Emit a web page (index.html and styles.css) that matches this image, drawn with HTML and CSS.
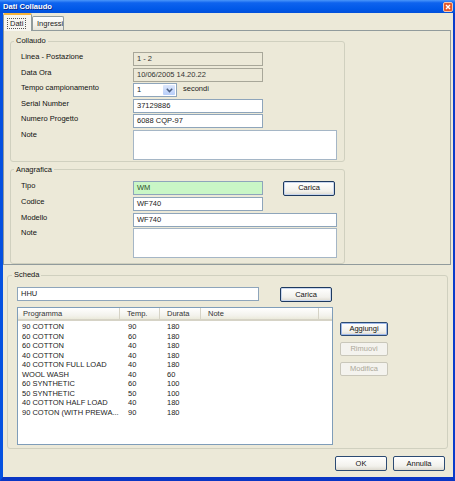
FILE: index.html
```html
<!DOCTYPE html>
<html>
<head>
<meta charset="utf-8">
<link rel="stylesheet" href="styles.css">
</head>
<body>
<div class="window">
  <div class="titlebar">
    <span class="title">Dati Collaudo</span>
    <span class="close"><svg width="10" height="10" viewBox="0 0 10 10"><rect x="0.5" y="0.5" width="9" height="9" rx="1.5" fill="#E2582C" stroke="#F4C8B0"/><path d="M3 3 L7 7 M7 3 L3 7" stroke="#fff" stroke-width="1.4"/></svg></span>
  </div>
  <div class="client">
    <div class="tabs">
      <div class="tab active"><span class="focus">Dati</span></div>
      <div class="tab">Ingressi</div>
    </div>
    <div class="tabpanel">
      <fieldset class="group g-collaudo">
        <legend>Collaudo</legend>
        <div class="form">
          <span class="lbl">Linea - Postazione</span><div class="field disabled">1 - 2</div>
          <span class="lbl">Data Ora</span><div class="field disabled">10/06/2005 14.20.22</div>
          <span class="lbl">Tempo campionamento</span>
          <div class="combo-row">
            <div class="combo"><span class="combo-val">1</span><span class="combo-btn"><svg width="7" height="5" viewBox="0 0 7 5"><path d="M0.8 0.8 L3.5 3.6 L6.2 0.8" fill="none" stroke="#4D6185" stroke-width="1.5"/></svg></span></div>
            <span class="unit">secondi</span>
          </div>
          <span class="lbl">Serial Number</span><div class="field">37129886</div>
          <span class="lbl">Numero Progetto</span><div class="field">6088 CQP-97</div>
          <span class="lbl">Note</span><div class="field area"></div>
        </div>
      </fieldset>
      <fieldset class="group g-anagrafica">
        <legend>Anagrafica</legend>
        <div class="form">
          <span class="lbl">Tipo</span>
          <div class="tipo-row"><div class="field green">WM</div><button class="btn strong">Carica</button></div>
          <span class="lbl">Codice</span><div class="field">WF740</div>
          <span class="lbl">Modello</span><div class="field wide">WF740</div>
          <span class="lbl">Note</span><div class="field area"></div>
        </div>
      </fieldset>
    </div>
    <fieldset class="group g-scheda">
      <legend>Scheda</legend>
      <div class="scheda-top">
        <div class="field hhu">HHU</div>
        <button class="btn strong">Carica</button>
      </div>
      <div class="scheda-main">
        <div class="list">
          <div class="list-head">
            <span class="hc c1">Programma</span><span class="hc c2">Temp.</span><span class="hc c3">Durata</span><span class="hc c4">Note</span><span class="hc c5"></span>
          </div>
          <div class="list-body">
            <div class="row"><span class="c1">90 COTTON</span><span class="c2">90</span><span class="c3">180</span></div>
            <div class="row"><span class="c1">60 COTTON</span><span class="c2">60</span><span class="c3">180</span></div>
            <div class="row"><span class="c1">60 COTTON</span><span class="c2">40</span><span class="c3">180</span></div>
            <div class="row"><span class="c1">40 COTTON</span><span class="c2">40</span><span class="c3">180</span></div>
            <div class="row"><span class="c1">40 COTTON FULL LOAD</span><span class="c2">40</span><span class="c3">180</span></div>
            <div class="row"><span class="c1">WOOL WASH</span><span class="c2">40</span><span class="c3">60</span></div>
            <div class="row"><span class="c1">60 SYNTHETIC</span><span class="c2">60</span><span class="c3">100</span></div>
            <div class="row"><span class="c1">50 SYNTHETIC</span><span class="c2">50</span><span class="c3">100</span></div>
            <div class="row"><span class="c1">40 COTTON HALF LOAD</span><span class="c2">40</span><span class="c3">180</span></div>
            <div class="row"><span class="c1">90 COTON (WITH PREWA...</span><span class="c2">90</span><span class="c3">180</span></div>
          </div>
        </div>
        <div class="side-btns">
          <button class="btn default">Aggiungi</button>
          <button class="btn disabled">Rimuovi</button>
          <button class="btn disabled">Modifica</button>
        </div>
      </div>
    </fieldset>
    <div class="footer">
      <button class="btn">OK</button>
      <button class="btn">Annulla</button>
    </div>
  </div>
</div>
</body>
</html>
```

FILE: styles.css
```css
* { box-sizing: border-box; }
html, body { margin: 0; padding: 0; }
body {
  width: 455px;
  height: 481px;
  font-family: "Liberation Sans", Arial, sans-serif;
  font-size: 7.5px;
  color: #000;
  background: #ECE9D8;
  overflow: hidden;
}
.window {
  width: 455px;
  height: 481px;
  display: flex;
  flex-direction: column;
  border-left: 3px solid #0551E0;
  border-right: 2px solid #0A3CCB;
  border-bottom: 4px solid #0A36C4;
  background: #ECE9D8;
}
.titlebar {
  height: 13px;
  flex: none;
  display: flex;
  align-items: center;
  justify-content: space-between;
  background: linear-gradient(to bottom, #4A96FA 0%, #0E63EE 22%, #0058E8 70%, #0350DA 100%);
  margin-left: -3px;
  margin-right: -2px;
  padding: 0 2px 0 3px;
}
.title {
  color: #fff;
  font-weight: bold;
  font-size: 7.6px;
  line-height: 10px;
  text-shadow: 1px 1px 0 #0A2C8A;
}
.close { display: flex; width: 10px; height: 10px; margin-top: 1px; }

.client {
  flex: 1;
  display: flex;
  flex-direction: column;
  background: #ECE9D8;
}

/* tabs */
.tabs {
  height: 17px;
  flex: none;
  display: flex;
  align-items: flex-end;
  padding-left: 0;
  position: relative;
  z-index: 1;
}
.tab {
  height: 14px;
  padding: 0 4px;
  border: 1px solid #919B9C;
  border-bottom: none;
  border-radius: 2px 2px 0 0;
  background: linear-gradient(#FEFEFE, #F2F1EA 60%, #E6E4D8);
  display: flex;
  align-items: center;
  line-height: 10px;
  color: #222;
}
.tab.active {
  height: 18px;
  margin-bottom: -1px;
  width: 29px;
  padding: 0 3px;
  background: #F7F6F0;
  border-top: 2px solid #F7B43A;
  align-items: center;
}
.tab .focus {
  border: 1px dotted #555;
  padding: 0 2px;
  line-height: 9px;
}
.tab + .tab { margin-left: 0; width: 32px; padding-left: 4px; }

.tabpanel {
  flex: none;
  margin-right: 2px;
  height: 235px;
  border: 1px solid #919B9C;
  background: #ECE9D8;
  padding: 0 0 0 6px;
}

/* group boxes */
.group {
  margin: 0;
  padding: 0;
  min-width: 0;
  border: 1px solid #D0D0BF;
  border-radius: 3px;
}
.group legend {
  padding: 0 2px;
  margin-left: 3px;
  line-height: 10px;
  font-size: 7.5px;
  color: #111;
}
.g-collaudo { width: 335px; margin-top: 5px; }
.g-anagrafica { width: 335px; margin-top: 3px; }
.g-scheda { width: 441px; margin: 5px 0 0 4px; }
.g-scheda legend { margin-left: 4px; }

.form {
  display: grid;
  grid-template-columns: 112px auto;
  row-gap: 1.5px;
  align-items: start;
  padding: 6px 0 1px 10px;
}
.g-anagrafica .form { padding-bottom: 5px; }
.lbl {
  line-height: 10px;
  padding-top: 0;
  color: #111;
}

.field {
  height: 14px;
  width: 130px;
  border: 1px solid #8EA5BB;
  background: #fff;
  padding: 0 3px;
  line-height: 12px;
  color: #222;
  white-space: nowrap;
}
.field.disabled {
  background: #ECE9D8;
  border-color: #A8A799;
  color: #333;
}
.field.area { width: 204px; height: 30px; border-color: #A5B6C6; }
.field.wide { width: 204px; }
.field.green { background: #C9F6C6; color: #2D4F2A; border-color: #8EA5BB; }

.combo-row { display: flex; align-items: center; gap: 6px; height: 14px; }
.combo {
  width: 44px;
  height: 14px;
  border: 1px solid #8EA5BB;
  background: #fff;
  display: flex;
  justify-content: space-between;
}
.combo-val { padding-left: 3px; line-height: 12px; color: #222; }
.combo-btn {
  width: 12px;
  margin: 1px;
  border-radius: 1px;
  background: linear-gradient(#DCE7FD, #B8CEF9);
  display: flex;
  align-items: center;
  justify-content: center;
}
.unit { color: #222; line-height: 10px; margin-top: -3px; }

.tipo-row { display: flex; align-items: start; gap: 20px; }

/* buttons */
.btn {
  font-family: "Liberation Sans", Arial, sans-serif;
  font-size: 7.5px;
  width: 52px;
  height: 15px;
  padding: 0;
  margin: 0;
  border: 1px solid #2C4B73;
  border-radius: 2px;
  background: linear-gradient(#FFFFFF, #F2F1EC 70%, #DDDAD0);
  color: #111;
  line-height: 12px;
}
.btn.strong { border-color: #1E3A60; box-shadow: inset 0 0 0 1px #C8D6EE; }
.btn.default { box-shadow: inset 0 0 0 1px #9EB8EA; }
.btn.disabled {
  border-color: #C9C7BA;
  background: #F4F3EE;
  color: #ACA899;
}

/* scheda */
.scheda-top {
  display: flex;
  align-items: start;
  gap: 21px;
  padding: 7px 0 0 9px;
}
.field.hhu { width: 242px; }
.scheda-main {
  display: flex;
  gap: 7px;
  padding: 5px 0 3px 9px;
}
.list {
  width: 316px;
  height: 138px;
  border: 1px solid #7F9DB9;
  background: #fff;
}
.list-head {
  display: grid;
  grid-template-columns: 102px 40px 41px 118px 1fr;
  height: 13px;
  background: linear-gradient(#FFFFFF, #F3F2EC 70%, #EBEADB);
  border-bottom: 2px solid #D6D3C6;
}
.hc {
  line-height: 11px;
  padding-left: 7px;
  color: #333;
  border-right: 1px solid #D6D3C6;
}
.hc.c1 { padding-left: 5px; }
.hc.c5 { border-right: none; }
.list-body { padding-top: 1px; }
.row {
  display: grid;
  grid-template-columns: 102px 40px 41px;
  height: 9.5px;
  line-height: 9.5px;
  color: #222;
  white-space: nowrap;
}
.row .c1 { padding-left: 4px; }
.row .c2 { padding-left: 8px; }
.row .c3 { padding-left: 7px; }

.side-btns {
  display: flex;
  flex-direction: column;
  gap: 6px;
  padding-top: 15px;
}
.side-btns .btn { width: 48px; height: 14px; }

.footer {
  display: flex;
  justify-content: flex-end;
  gap: 6px;
  padding: 7px 8px 0 0;
}
```
